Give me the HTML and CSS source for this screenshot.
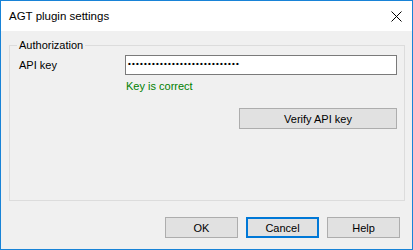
FILE: index.html
```html
<!DOCTYPE html>
<html lang="en">
<head>
    <meta charset="UTF-8">
    <title>AGT plugin settings</title>
    <link rel="stylesheet" href="styles.css">
</head>
<body>
    <div class="window">
        <div class="titlebar">
            <div class="title">AGT plugin settings</div>
            <svg class="close" width="11" height="11" viewBox="0 0 11 11">
                <path d="M0.5 0.5 L10.5 10.5 M10.5 0.5 L0.5 10.5" stroke="#000" stroke-width="1" fill="none"/>
            </svg>
        </div>

        <div class="content">
            <div class="group">
                <span class="legend">Authorization</span>
                <div class="row">
                    <label class="field-label">API key</label>
                    <div class="input"><span class="dots">••••••••••••••••••••••••••••</span></div>
                </div>
                <div class="status">Key is correct</div>
                <div class="verify-row">
                    <button class="btn verify">Verify API key</button>
                </div>
            </div>

            <div class="buttons">
                <button class="btn">OK</button>
                <button class="btn default">Cancel</button>
                <button class="btn">Help</button>
            </div>
        </div>
    </div>
</body>
</html>
```

FILE: styles.css
```css
* { margin: 0; padding: 0; box-sizing: border-box; }

body {
    font-family: "Liberation Sans", Arial, sans-serif;
    font-size: 11px;
    color: #000;
    background: #fff;
}

.window {
    width: 413px;
    height: 250px;
    border: 1px solid #1883d7;
    background: #f0f0f0;
    display: flex;
    flex-direction: column;
}

.titlebar {
    height: 30px;
    background: #fff;
    display: flex;
    align-items: center;
    justify-content: space-between;
    padding: 0 10px 0 8px;
}

.title {
    font-size: 11.5px;
    padding-bottom: 1px;
}

.close {
    display: block;
    margin-top: 1px;
}

.content {
    flex: 1;
    padding: 14px 0 0 8px;
}

.group {
    position: relative;
    width: 396px;
    height: 156px;
    border: 1px solid #dcdcdc;
    padding: 9px 7px 0 9px;
}

.legend {
    position: absolute;
    top: -8px;
    left: 7px;
    padding: 0 2px;
    background: #f0f0f0;
    line-height: 15px;
}

.row {
    display: flex;
    align-items: center;
}

.field-label {
    width: 106px;
    line-height: 15px;
}

.input {
    width: 272px;
    height: 20px;
    background: #fff;
    border: 1px solid #7a7a7a;
    display: flex;
    align-items: center;
    padding: 0 0 3px 2px;
}

.dots {
    font-size: 8px;
    font-weight: bold;
    letter-spacing: 1.2px;
    line-height: 8px;
    color: #000;
}

.status {
    margin: 4px 0 0 107px;
    line-height: 15px;
    color: #008000;
}

.verify-row {
    display: flex;
    justify-content: flex-end;
    margin-top: 14px;
}

.btn {
    font-family: inherit;
    font-size: 11px;
    width: 73px;
    height: 21px;
    background: #e1e1e1;
    border: 1px solid #adadad;
    color: #000;
}

.btn.verify {
    width: 158px;
}

.btn.default {
    border: 2px solid #0078d7;
}

.buttons {
    display: flex;
    justify-content: flex-end;
    gap: 8px;
    margin-top: 16px;
    padding-right: 12px;
}
```
